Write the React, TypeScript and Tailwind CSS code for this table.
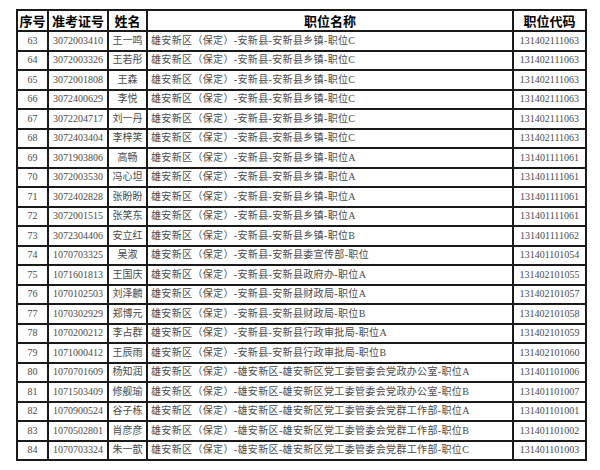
const rows: [string, string, string, string, string][] = [
  ["63", "3072003410", "王一鸣", "雄安新区（保定）-安新县-安新县乡镇-职位C", "131402111063"],
  ["64", "3072003326", "王若彤", "雄安新区（保定）-安新县-安新县乡镇-职位C", "131402111063"],
  ["65", "3072001808", "王森", "雄安新区（保定）-安新县-安新县乡镇-职位C", "131402111063"],
  ["66", "3072400629", "李悦", "雄安新区（保定）-安新县-安新县乡镇-职位C", "131402111063"],
  ["67", "3072204717", "刘一丹", "雄安新区（保定）-安新县-安新县乡镇-职位C", "131402111063"],
  ["68", "3072403404", "李梓笑", "雄安新区（保定）-安新县-安新县乡镇-职位C", "131402111063"],
  ["69", "3071903806", "高畅", "雄安新区（保定）-安新县-安新县乡镇-职位A", "131401111061"],
  ["70", "3072003530", "冯心坦", "雄安新区（保定）-安新县-安新县乡镇-职位A", "131401111061"],
  ["71", "3072402828", "张盼盼", "雄安新区（保定）-安新县-安新县乡镇-职位A", "131401111061"],
  ["72", "3072001515", "张笑东", "雄安新区（保定）-安新县-安新县乡镇-职位A", "131401111061"],
  ["73", "3072304406", "安立红", "雄安新区（保定）-安新县-安新县乡镇-职位B", "131401111062"],
  ["74", "1070703325", "吴淑", "雄安新区（保定）-安新县-安新县委宣传部-职位", "131401101054"],
  ["75", "1071601813", "王国庆", "雄安新区（保定）-安新县-安新县政府办-职位A", "131402101055"],
  ["76", "1070102503", "刘泽麟", "雄安新区（保定）-安新县-安新县财政局-职位A", "131402101057"],
  ["77", "1070302929", "郑博元", "雄安新区（保定）-安新县-安新县财政局-职位B", "131402101058"],
  ["78", "1070200212", "李占群", "雄安新区（保定）-安新县-安新县行政审批局-职位A", "131402101059"],
  ["79", "1071000412", "王辰雨", "雄安新区（保定）-安新县-安新县行政审批局-职位B", "131402101060"],
  ["80", "1070701609", "杨知润", "雄安新区（保定）-雄安新区-雄安新区党工委管委会党政办公室-职位A", "131401101006"],
  ["81", "1071503409", "修舰瑜", "雄安新区（保定）-雄安新区-雄安新区党工委管委会党政办公室-职位B", "131401101007"],
  ["82", "1070900524", "谷子栋", "雄安新区（保定）-雄安新区-雄安新区党工委管委会党群工作部-职位A", "131401101001"],
  ["83", "1070502801", "肖彦彦", "雄安新区（保定）-雄安新区-雄安新区党工委管委会党群工作部-职位B", "131401101002"],
  ["84", "1070703324", "朱一歆", "雄安新区（保定）-雄安新区-雄安新区党工委管委会党群工作部-职位C", "131401101003"],
];

const cell = "border-2 border-[#1a1a1a] p-0";
const serif = "font-['Liberation_Serif','Noto_Sans_CJK_SC',serif]";

export default function App() {
  return (
    <div className="w-[600px] h-[470px] bg-white pl-[16px] pt-[9px]">
      <table className="table-fixed border-collapse w-[569px]">
        <colgroup>
          <col className="w-[31px]" />
          <col className="w-[60px]" />
          <col className="w-[39px]" />
          <col className="w-[366px]" />
          <col className="w-[73px]" />
        </colgroup>
        <thead>
          <tr className="h-[21px] font-['Noto_Sans_CJK_SC',sans-serif] font-black text-[13px] text-black leading-none">
            <th className={cell}>序号</th>
            <th className={cell}>准考证号</th>
            <th className={cell}>姓名</th>
            <th className={cell}>职位名称</th>
            <th className={cell}>职位代码</th>
          </tr>
        </thead>
        <tbody className={`${serif} text-[10px] text-[#4a4a4a] leading-none`}>
          {rows.map((r) => (
            <tr key={r[0]} className="h-[19.5px]">
              <td className={`${cell} text-center`}>{r[0]}</td>
              <td className={`${cell} text-center`}>{r[1]}</td>
              <td className={`${cell} text-center`}>{r[2]}</td>
              <td className={`${cell} pl-[3px] tracking-[0.35px] whitespace-nowrap overflow-hidden`}>{r[3]}</td>
              <td className={`${cell} text-center`}>{r[4]}</td>
            </tr>
          ))}
        </tbody>
      </table>
    </div>
  );
}
